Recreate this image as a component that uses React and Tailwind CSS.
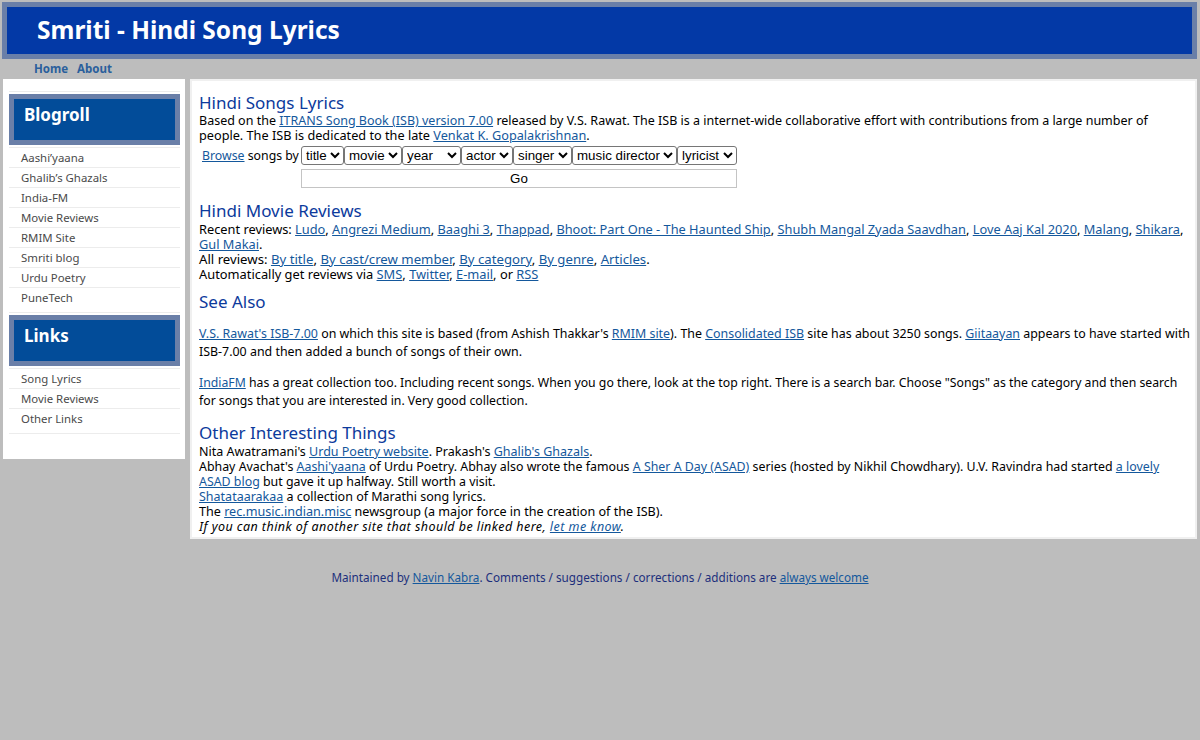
import React from "react";

const blogroll = ["Aashi’yaana", "Ghalib’s Ghazals", "India-FM", "Movie Reviews", "RMIM Site", "Smriti blog", "Urdu Poetry", "PuneTech"];
const links = ["Song Lyrics", "Movie Reviews", "Other Links"];

const A = ({ children }) => (
    <a href="#" className="text-[#14589c] underline">{children}</a>
);

const SideTitle = ({ children }) => (
    <div className="border-[5px] border-[#6a7fa8] bg-[#024c99] h-[51px] pl-[10px] pt-[4px] text-[17px] leading-[24px] font-bold text-white">
        {children}
    </div>
);

const SideList = ({ items }) => (
    <ul className="text-[11.4px] leading-[15px] text-[#4a4a4a] mt-[2px] border-t border-[#ececec]">
        {items.map((item) => (
            <li key={item} className="h-[20px] last:h-[25px] pl-[12px] pt-[2px] border-b border-[#ececec]">{item}</li>
        ))}
    </ul>
);

const Heading = ({ children, className = "" }) => (
    <h2 className={"text-[17px] leading-[20px] text-[#0c3a9c] " + className}>{children}</h2>
);

const Select = ({ options, w }) => (
    <select className={"h-[19px] border border-[#767676] rounded-[3px] bg-white text-[13.33px] font-['Liberation_Sans',sans-serif] text-black " + w}>
        {options.map((o) => <option key={o}>{o}</option>)}
    </select>
);

export default function App() {
    return (
        <div className="min-h-[740px] bg-[#bdbdbd] font-['Noto_Sans',sans-serif] text-[12.5px] leading-[15px] text-black pt-[2px]">
            <div className="ml-[2px] mr-[3px] h-[57px] border-[5px] border-[#6a7fa8] bg-[#0339a6] pl-[30px] pt-[5px] text-[24.5px] leading-[36px] font-bold text-white">
                Smriti - Hindi Song Lyrics
            </div>
            <div className="flex gap-[9px] pl-[34px] h-[20px] pt-[2px] text-[11.5px] font-bold text-[#2a5f9c]">
                <span>Home</span>
                <span>About</span>
            </div>
            <div className="flex items-start gap-[5px] pl-[3px] pr-[3px]">
                <aside className="w-[182px] h-[380px] bg-white pl-[6px] pr-[5px] pt-[12px] shrink-0">
                    <div className="h-[3px] border-t border-[#ececec]" />
                    <SideTitle>Blogroll</SideTitle>
                    <SideList items={blogroll} />
                    <div className="mt-[2px]"><SideTitle>Links</SideTitle></div>
                    <SideList items={links} />
                </aside>
                <main className="flex-1 h-[460px] bg-white border-2 border-[#f0f0f0] pl-[7px] pr-[4px] pt-[12px]">
                    <Heading>Hindi Songs Lyrics</Heading>
                    <p>
                        Based on the <A>ITRANS Song Book (ISB) version 7.00</A> released by V.S. Rawat. The ISB is a internet-wide collaborative effort with contributions from a large number of<br />
                        <span className="text-[12.7px]">people. The ISB is dedicated to the late <A>Venkat K. Gopalakrishnan</A>.</span>
                    </p>
                    <div className="flex items-center mt-[3px]">
                        <div className="w-[102px] pl-[3px] whitespace-nowrap text-[12.3px]"><A>Browse</A> songs by</div>
                        <Select options={["title"]} w="w-[43px]" />
                        <Select options={["movie"]} w="w-[58px]" />
                        <Select options={["year"]} w="w-[59px]" />
                        <Select options={["actor"]} w="w-[52px]" />
                        <Select options={["singer"]} w="w-[59px]" />
                        <Select options={["music director"]} w="w-[105px]" />
                        <Select options={["lyricist"]} w="w-[60px]" />
                    </div>
                    <button className="block ml-[102px] mt-[4px] w-[436px] h-[19px] border border-[#c4c4c4] bg-white text-[13.33px] leading-[15px] font-['Liberation_Sans',sans-serif]">Go</button>

                    <Heading className="mt-[13px]">Hindi Movie Reviews</Heading>
                    <p className="mt-[1px] text-[12.8px]">
                        Recent reviews: <A>Ludo</A>, <A>Angrezi Medium</A>, <A>Baaghi 3</A>, <A>Thappad</A>, <A>Bhoot: Part One - The Haunted Ship</A>, <A>Shubh Mangal Zyada Saavdhan</A>, <A>Love Aaj Kal 2020</A>, <A>Malang</A>, <A>Shikara</A>,<br /><A>Gul Makai</A>.
                    </p>
                    <p className="text-[13.2px]">All reviews: <A>By title</A>, <A>By cast/crew member</A>, <A>By category</A>, <A>By genre</A>, <A>Articles</A>.</p>
                    <p className="text-[12.85px]">Automatically get reviews via <A>SMS</A>, <A>Twitter</A>, <A>E-mail</A>, or <A>RSS</A></p>

                    <Heading className="mt-[10px]">See Also</Heading>
                    <p className="mt-[13px] leading-[18px] text-[12.42px]">
                        <A>V.S. Rawat's ISB-7.00</A> on which this site is based (from Ashish Thakkar's <A>RMIM site</A>). The <A>Consolidated ISB</A> site has about 3250 songs. <A>Giitaayan</A> appears to have started with<br />ISB-7.00 and then added a bunch of songs of their own.
                    </p>
                    <p className="mt-[13px] leading-[18px] text-[12.25px]">
                        <A>IndiaFM</A> has a great collection too. Including recent songs. When you go there, look at the top right. There is a search bar. Choose "Songs" as the category and then search<br />for songs that you are interested in. Very good collection.
                    </p>

                    <Heading className="mt-[13px]">Other Interesting Things</Heading>
                    <p className="mt-[1px]">Nita Awatramani's <A>Urdu Poetry website</A>. Prakash's <A>Ghalib's Ghazals</A>.</p>
                    <p className="text-[12.38px]">
                        Abhay Avachat's <A>Aashi'yaana</A> of Urdu Poetry. Abhay also wrote the famous <A>A Sher A Day (ASAD)</A> series (hosted by Nikhil Chowdhary). U.V. Ravindra had started <A>a lovely</A><br /><A>ASAD blog</A> but gave it up halfway. Still worth a visit.
                    </p>
                    <p><A>Shatataarakaa</A> a collection of Marathi song lyrics.</p>
                    <p className="text-[12.6px]">The <A>rec.music.indian.misc</A> newsgroup (a major force in the creation of the ISB).</p>
                    <p className="italic tracking-[0.45px]">If you can think of another site that should be linked here, <A>let me know</A>.</p>
                </main>
            </div>
            <div className="text-center text-[11.7px] text-[#1c2f7c] pt-[31px]">
                Maintained by <A>Navin Kabra</A>. Comments / suggestions / corrections / additions are <A>always welcome</A>
            </div>
        </div>
    );
}
